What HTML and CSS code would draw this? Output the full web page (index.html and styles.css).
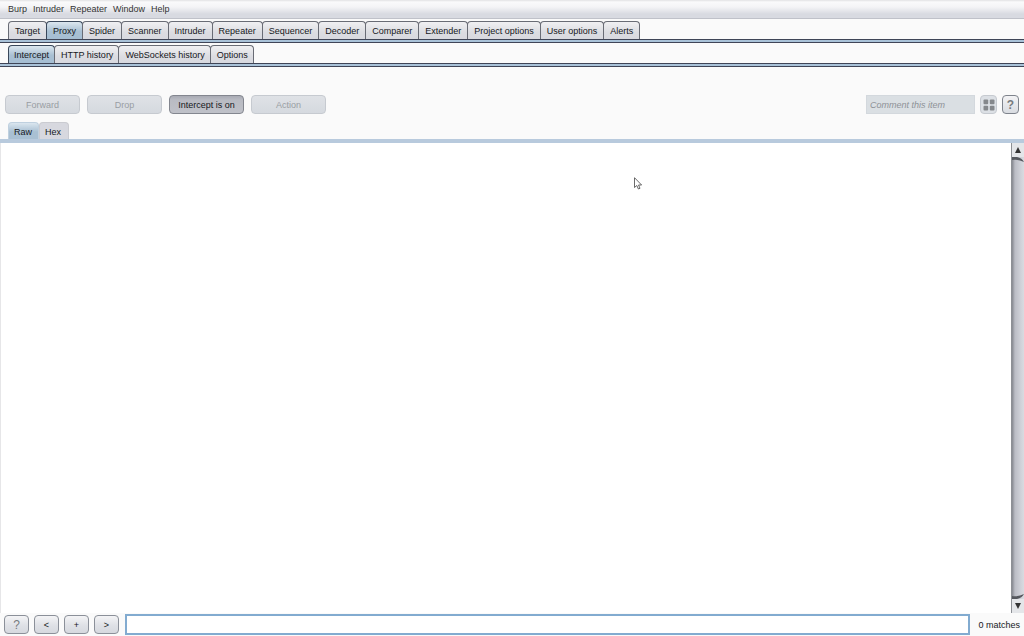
FILE: index.html
```html
<!DOCTYPE html>
<html lang="en">
<head>
    <meta charset="UTF-8">
    <meta name="viewport" content="width=device-width, initial-scale=1.0">
    <title>Burp Suite</title>
    <link rel="stylesheet" href="styles.css">
</head>
<body>
    <nav class="menu">
        <button>Burp</button>
        <button>Intruder</button>
        <button>Repeater</button>
        <button>Window</button>
        <button>Help</button>
    </nav>

    <div class="tabs mainTabs">
        <button>Target</button>
        <button class="active">Proxy</button>
        <button>Spider</button>
        <button>Scanner</button>
        <button>Intruder</button>
        <button>Repeater</button>
        <button>Sequencer</button>
        <button>Decoder</button>
        <button>Comparer</button>
        <button>Extender</button>
        <button>Project options</button>
        <button>User options</button>
        <button>Alerts</button>
    </div>
    <div class="rule"></div>

    <div class="tabs">
        <button class="active">Intercept</button>
        <button>HTTP history</button>
        <button>WebSockets history</button>
        <button>Options</button>
    </div>
    <div class="rule"></div>

    <div class="toolbar">
        <button class="action" disabled>Forward</button>
        <button class="action" disabled>Drop</button>
        <button class="action pressed">Intercept is on</button>
        <button class="action" disabled>Action</button>
        <input type="text" class="comment" placeholder="Comment this item" aria-label="Comment" disabled>
        <button class="square highlight" aria-label="Highlight" disabled>
            <svg width="12" height="12" viewBox="0 0 12 12" fill="#85888c">
                <rect x="0.5" y="0.5" width="4.7" height="4.7" rx="1"/>
                <rect x="6.8" y="0.5" width="4.7" height="4.7" rx="1"/>
                <rect x="0.5" y="6.8" width="4.7" height="4.7" rx="1"/>
                <rect x="6.8" y="6.8" width="4.7" height="4.7" rx="1"/>
            </svg>
        </button>
        <button class="square help">?</button>
    </div>

    <div class="viewTabs">
        <button class="active">Raw</button>
        <button>Hex</button>
    </div>

    <main class="editor">
        <textarea aria-label="Raw message" spellcheck="false"></textarea>
        <div class="scrollbar">
            <button aria-label="Scroll up"><svg width="6" height="6" viewBox="0 0 6 6"><path d="M3 0L6 6H0Z" fill="#333"/></svg></button>
            <div class="track">
                <svg width="12" height="5" viewBox="0 0 12 5"><path d="M0 0H5Q10 1 12 5Q6 2 0 3Z" fill="#55585e"/></svg>
                <svg width="12" height="5" viewBox="0 0 12 5"><path d="M0 5H5Q10 4 12 0Q6 3 0 2Z" fill="#55585e"/></svg>
            </div>
            <button aria-label="Scroll down"><svg width="6" height="6" viewBox="0 0 6 6"><path d="M0 0H6L3 6Z" fill="#333"/></svg></button>
        </div>
        <svg class="cursor" width="9" height="13" viewBox="0 0 9 13">
            <path d="M0.5 0.7V10.5L2.8 8.5L4.4 12L6 11.3L4.5 8H7.6Z" fill="#fff" stroke="#444" stroke-width="0.8"/>
        </svg>
    </main>

    <footer class="search">
        <button class="help">?</button>
        <button>&lt;</button>
        <button>+</button>
        <button>&gt;</button>
        <input type="text" aria-label="Search">
        <span>0 matches</span>
    </footer>
</body>
</html>
```
FILE: styles.css
```css
* {
    box-sizing: border-box;
}
body {
    display: flex;
    flex-direction: column;
    height: 100vh;
    margin: 0;
    background-color: #fafafa;
    font-family: "Liberation Sans", Arial, sans-serif;
    font-size: 9px;
    color: #16181c;
}
button, input {
    margin: 0;
    padding: 0;
    font: inherit;
    color: inherit;
}
button {
    display: flex;
    align-items: center;
    justify-content: center;
    white-space: nowrap;
}
.menu {
    display: flex;
    gap: 6px;
    height: 19px;
    padding-left: 8px;
    background: linear-gradient(#e2e2e4 0, #fafafb 2px, #f4f4f6 7px, #d8dae1 14px, #d8dae1);
    border-bottom: 1px solid #bfc1c9;
}
.menu button {
    border: none;
    background: none;
    color: #333;
}
.tabs {
    display: flex;
    padding: 2px 8px 0;
}
.tabs button {
    height: 18px;
    padding: 1px 5px 0;
    border: 1px solid #696c75;
    border-bottom: none;
    border-radius: 4px 4px 0 0;
    background: linear-gradient(#f0f0f2, #dcdde2 60%, #d8d9df);
}
.tabs button + button {
    margin-left: -1px;
    padding-left: 6px;
}
.tabs.mainTabs button {
    padding: 1px 6px 0;
}
.tabs .active {
    border-color: #39475a;
    background: linear-gradient(#dce7ef, #a9c0d3 55%, #a5bed3);
}
.rule {
    flex-shrink: 0;
    height: 4px;
    border: 1px solid #3f4557;
    border-width: 1px 0;
    background: #a9c2d8;
}
.toolbar {
    display: flex;
    align-items: center;
    gap: 7px;
    margin-top: 28px;
    padding: 0 5px;
}
.action {
    width: 75px;
    height: 19px;
    border: 1px solid #c6cad0;
    border-radius: 4px;
    background: linear-gradient(#dfe2e6, #d5d9df);
}
.action:disabled {
    color: #999da3;
}
.pressed {
    border-color: #83868f;
    background: linear-gradient(#a9abb4, #b9bbc3 4px, #bfc1c8);
}
.comment {
    width: 109px;
    height: 19px;
    margin-left: auto;
    padding-left: 3px;
    border: 1px solid #d3d8dd;
    background: #dadfe3;
    font-style: italic;
}
.comment::placeholder {
    color: #8e9297;
}
.square {
    width: 17px;
    height: 19px;
    margin-left: -2px;
    border: 1px solid #7e838c;
    border-radius: 4px;
    background: linear-gradient(#f3f3f5, #d9dce1);
}
.highlight {
    border-color: #c6cad0;
    background: #dce0e5;
}
.help {
    font-size: 12px;
    color: #777b80;
}
.toolbar .help {
    font-weight: bold;
}
.viewTabs {
    display: flex;
    margin-top: 8px;
    padding-left: 8px;
    border-bottom: 4px solid #b8cadd;
}
.viewTabs button {
    height: 17px;
    padding: 2px 6px 0 5px;
    border: 1px solid #cacbd1;
    border-bottom: none;
    border-radius: 4px 4px 0 0;
    background: #d7d8df;
}
.viewTabs button + button {
    padding: 2px 7px 0 5px;
}
.viewTabs .active {
    border-color: #bfd0df;
    background: linear-gradient(#dbe6ef, #a9c0d3 55%, #a9c0d3);
}
.editor {
    position: relative;
    display: flex;
    flex: 1;
    min-height: 0;
    border-left: 1px solid #e6e6e8;
    background: #fff;
}
.editor textarea {
    flex: 1;
    border: none;
    outline: none;
    resize: none;
    background: #fff;
}
.scrollbar {
    display: flex;
    flex-direction: column;
    width: 13px;
    border-left: 1px solid #8d9095;
}
.scrollbar button {
    height: 14px;
    padding: 0;
    border: none;
    background: #e4e6e9;
}
.track {
    display: flex;
    flex: 1;
    flex-direction: column;
    justify-content: space-between;
    background: linear-gradient(90deg, #85888f, #bbbdc5 3px, #d0d2d9 9px, #d9dbe0);
}
.cursor {
    position: absolute;
    top: 34px;
    left: 633px;
}
.search {
    display: flex;
    align-items: center;
    gap: 5px;
    height: 23px;
    padding: 0 4px;
}
.search button {
    width: 25px;
    height: 19px;
    border: 1px solid #8b9099;
    border-radius: 4px;
    background: linear-gradient(#f4f4f6, #dfe1e6 55%, #d6d9df);
}
.search input {
    flex: 1;
    height: 21px;
    margin-left: 1px;
    padding: 0 4px;
    border: 2px solid #82abd0;
    outline: none;
    background: #fff;
}
.search span {
    margin-left: 3px;
}
```
